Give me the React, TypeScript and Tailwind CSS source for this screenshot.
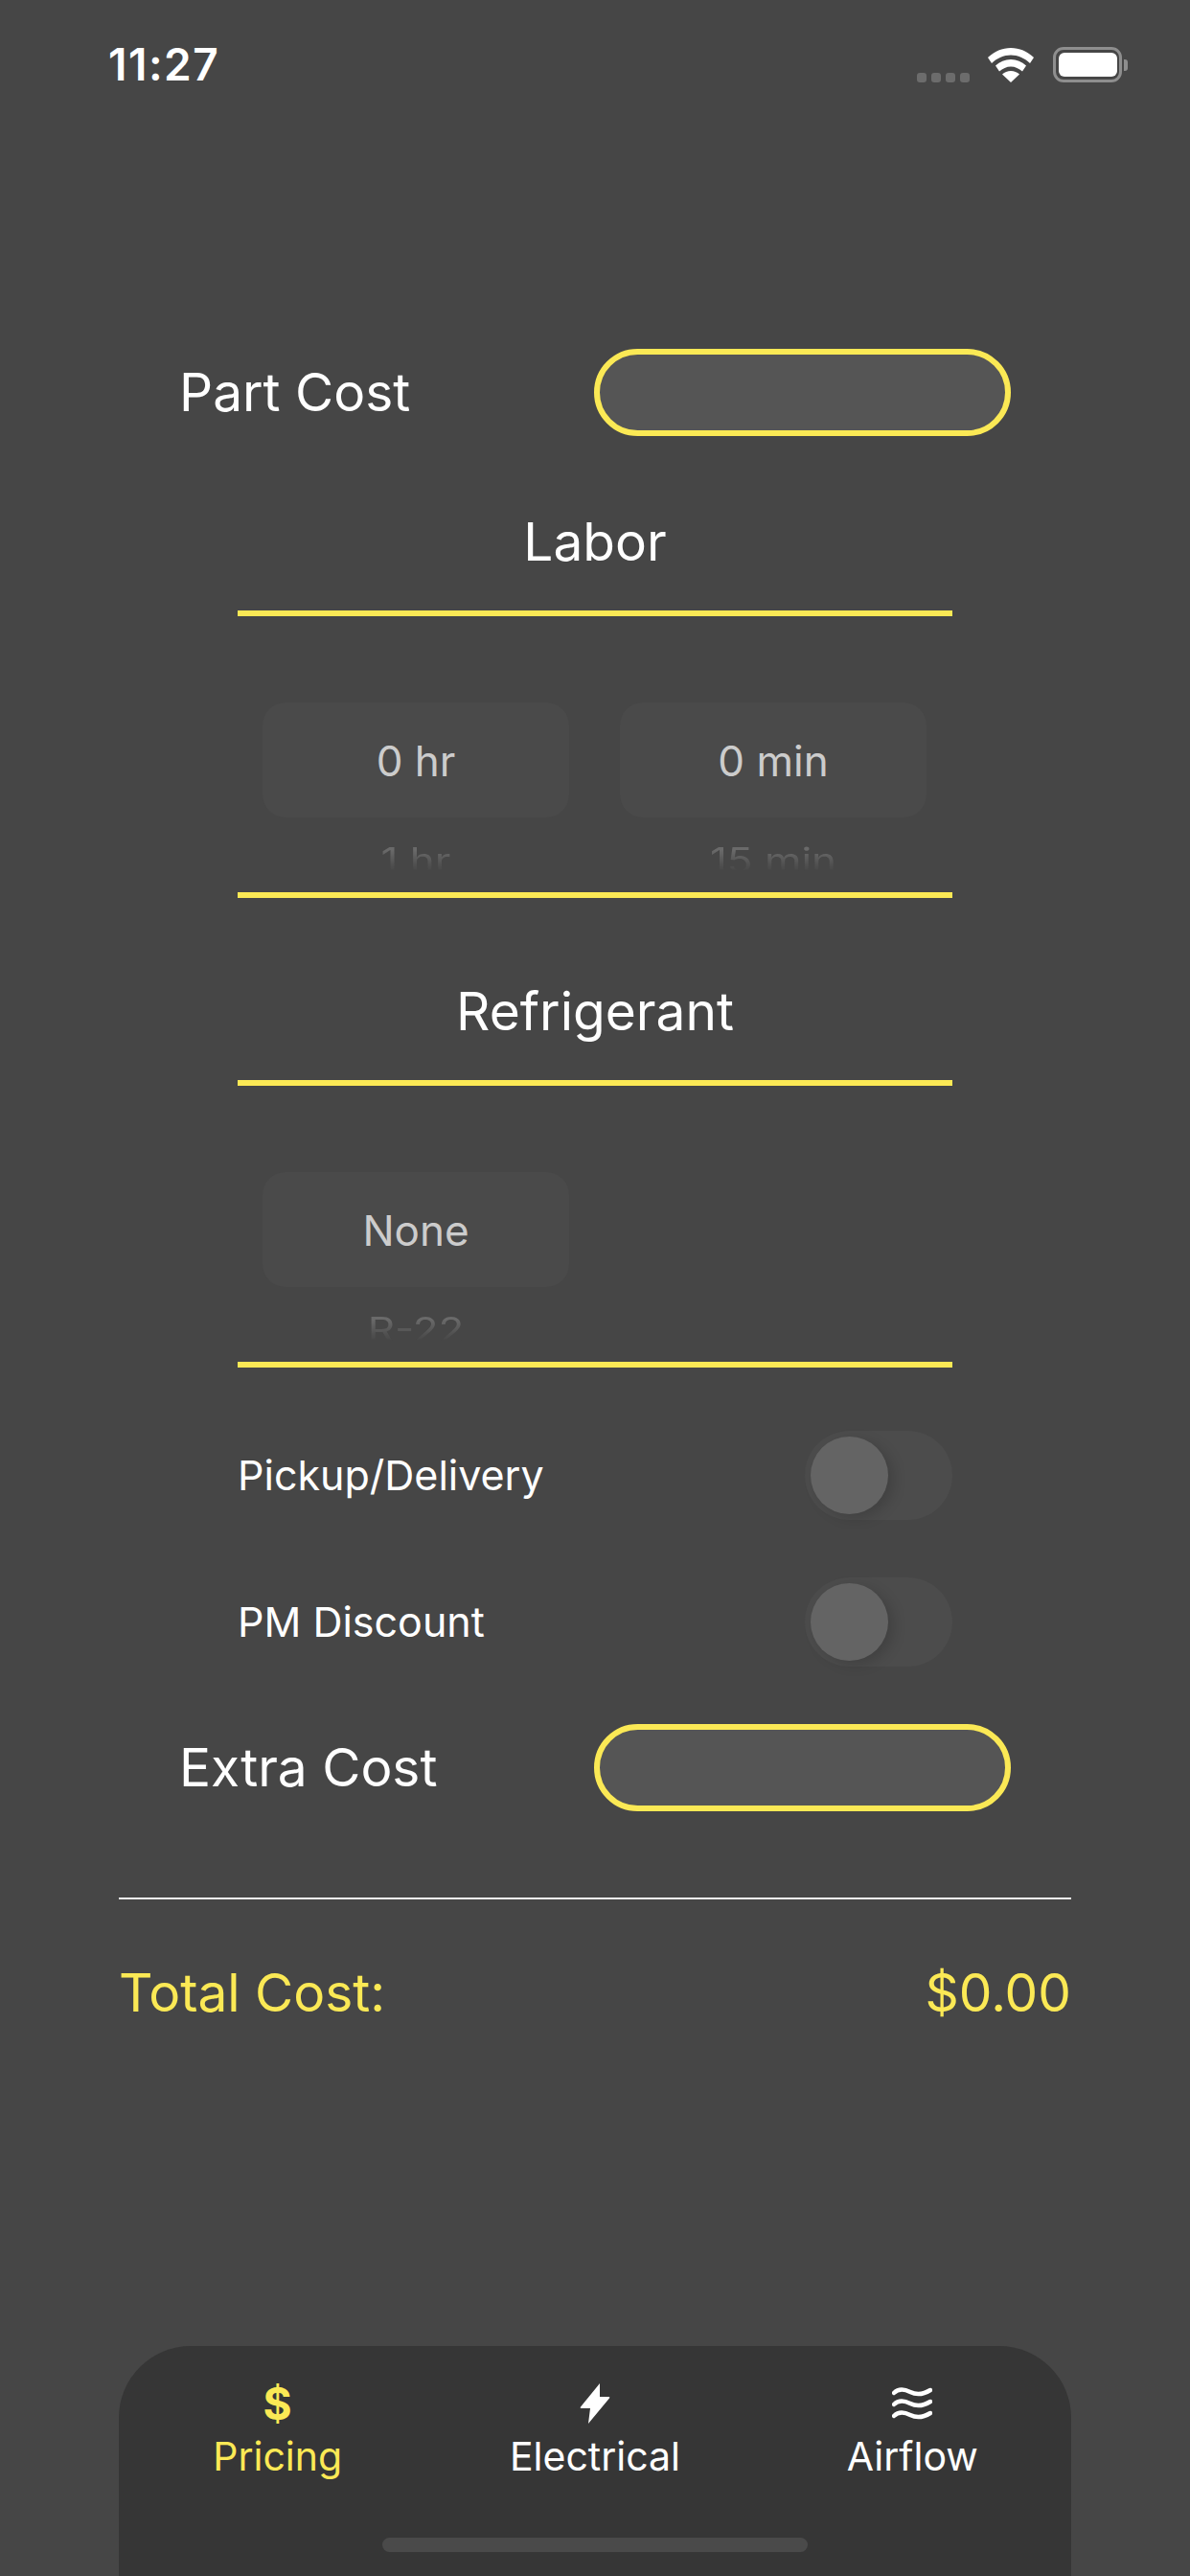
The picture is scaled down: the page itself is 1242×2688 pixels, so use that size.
import React from "react";

function Money({ label }: { label: string }) {
  return (
    <div className="flex h-[91px] items-center justify-between pl-[63px] pr-[63px]">
      <span className="text-[55px] leading-none text-white">{label}</span>
      <div className="h-[91px] w-[435px] rounded-[46px] border-[6px] border-[#fbe955] bg-[#555555]" />
    </div>
  );
}

function Wheel({ current, next }: { current: string; next: string }) {
  return (
    <div className="flex w-[320px] flex-col items-center">
      <div className="flex h-[120px] w-full items-center justify-center rounded-[24px] bg-[#4a4a4a] pt-[2px] text-[44px] leading-none text-[#cccccc]">
        {current}
      </div>
      <div className="flex h-[56px] w-full items-start justify-center overflow-hidden pt-[27px] text-[44px] leading-none text-[#6a6a6a] [mask-image:linear-gradient(to_bottom,#000_60%,transparent_100%)]">
        <span className="origin-top scale-y-[0.82]">{next}</span>
      </div>
    </div>
  );
}

function Section({ title, children, gap }: { title: string; children: React.ReactNode; gap?: string }) {
  return (
    <section className="mx-auto w-[746px]">
      <div className="flex h-[120px] items-center justify-center pb-[24px] text-[55px] leading-none text-white">{title}</div>
      <div className="h-[6px] bg-[#fbe955]" />
      <div className="flex h-[288px] items-start pl-[26px] pt-[90px]">
        <div className={`flex ${gap ?? ""}`}>{children}</div>
      </div>
      <div className="h-[6px] bg-[#fbe955]" />
    </section>
  );
}

function Toggle({ label }: { label: string }) {
  return (
    <div className="mx-auto flex h-[93px] w-[746px] items-center justify-between">
      <span className="text-[43px] leading-none text-white">{label}</span>
      <div className="flex h-[93px] w-[154px] items-center rounded-full bg-[#4c4c4c] pl-[6px]">
        <div className="h-[81px] w-[81px] rounded-full bg-[#646464] shadow-[6px_4px_14px_rgba(0,0,0,0.15)]" />
      </div>
    </div>
  );
}

function Wifi() {
  return (
    <svg width="48" height="36" viewBox="0 0 48 36" fill="#ffffff">
      <path d="M24 0C15 0 7 3.500 0 10l4 6c6-5.500 12.500-8.500 20-8.500S38 10.500 44 16l4-6C41 3.500 33 0 24 0Z" />
      <path d="M24 12c-6 0-11.500 2.300-16 6.500l4 6c3.500-3 7.500-5 12-5s8.500 2 12 5l4-6C35.500 14.300 30 12 24 12Z" />
      <path d="M24 24c-3.500 0-6.500 1.200-9 3.500L24 36l9-8.500C30.500 25.200 27.500 24 24 24Z" />
    </svg>
  );
}

function Tab({ label, active, icon }: { label: string; active?: boolean; icon: React.ReactNode }) {
  return (
    <div className={`flex flex-col items-center ${active ? "text-[#fbe955]" : "text-white"}`}>
      <div className="flex h-[42px] items-center justify-center">{icon}</div>
      <div className="mt-[9px] text-[41px] leading-[50px]">{label}</div>
    </div>
  );
}

export default function App() {
  return (
    <div className="flex h-[2688px] w-[1242px] flex-col overflow-hidden bg-[#464646] font-['Inter',sans-serif]">
      <header className="flex h-[134px] items-start justify-between pl-[113px] pr-[65px] pt-[44px]">
        <span className="text-[46px] font-semibold leading-[46px] tracking-[1.500px] text-white">11:27</span>
        <div className="flex items-center pt-[5px]">
          <div className="mr-[19px] flex gap-[5px] self-end">
            <i className="h-[10px] w-[10px] rounded-[3px] bg-[#6c6c6c]" />
            <i className="h-[10px] w-[10px] rounded-[3px] bg-[#6c6c6c]" />
            <i className="h-[10px] w-[10px] rounded-[3px] bg-[#6c6c6c]" />
            <i className="h-[10px] w-[10px] rounded-[3px] bg-[#6c6c6c]" />
          </div>
          <Wifi />
          <div className="ml-[20px] flex h-[37px] w-[72px] items-center justify-center rounded-[11px] border-[3px] border-[#8e8e8e]">
            <div className="h-[25px] w-[61px] rounded-[6px] bg-white" />
          </div>
          <div className="ml-[2px] h-[12px] w-[4px] rounded-r-[3px] bg-[#8e8e8e]" />
        </div>
      </header>

      <main className="mx-[124px] flex flex-1 flex-col">
        <div className="mt-[230px]">
          <Money label="Part Cost" />
        </div>
        <div className="mt-[62px]">
          <Section title="Labor" gap="gap-[53px]">
            <Wheel current="0 hr" next="1 hr" />
            <Wheel current="0 min" next="15 min" />
          </Section>
        </div>
        <div className="mt-[70px]">
          <Section title="Refrigerant">
            <Wheel current="None" next="R-22" />
          </Section>
        </div>
        <div className="mt-[66px]">
          <Toggle label="Pickup/Delivery" />
        </div>
        <div className="mt-[60px]">
          <Toggle label="PM Discount" />
        </div>
        <div className="mt-[60px]">
          <Money label="Extra Cost" />
        </div>
        <div className="mt-[90px] h-[2px] bg-[#f2f2f2]" />
        <div className="mt-[67px] flex items-center justify-between text-[55px] leading-[60px] text-[#fbe955]">
          <span>Total Cost:</span>
          <span>$0.00</span>
        </div>

        <nav className="mt-auto h-[240px] rounded-t-[75px] bg-[#363636]">
          <div className="grid grid-cols-3 pt-[39px]">
            <Tab
              active
              label="Pricing"
              icon={<span className="text-[46px] font-bold leading-none">$</span>}
            />
            <Tab
              label="Electrical"
              icon={
                <svg width="32" height="42" viewBox="0 0 32 42" fill="#ffffff">
                  <path d="M21 0 1 24.500c-.6.800-.3 1.500.7 1.500H11L9 42 31 15.500c.6-.8.3-1.500-.7-1.500H21Z" />
                </svg>
              }
            />
            <Tab
              label="Airflow"
              icon={
                <svg width="42" height="34" viewBox="0 0 42 34" fill="none" stroke="#ffffff" strokeWidth="4.500" strokeLinecap="round">
                  <path d="M2 6c5-5 11-4 17-1s13 3 21-2" />
                  <path d="M2 18c5-5 11-4 17-1s13 3 21-2" />
                  <path d="M2 30c5-5 11-4 17-1s13 3 21-2" />
                </svg>
              }
            />
          </div>
          <div className="mx-auto mt-[60px] h-[15px] w-[444px] rounded-[8px] bg-[#4a4a4a]" />
        </nav>
      </main>
    </div>
  );
}
